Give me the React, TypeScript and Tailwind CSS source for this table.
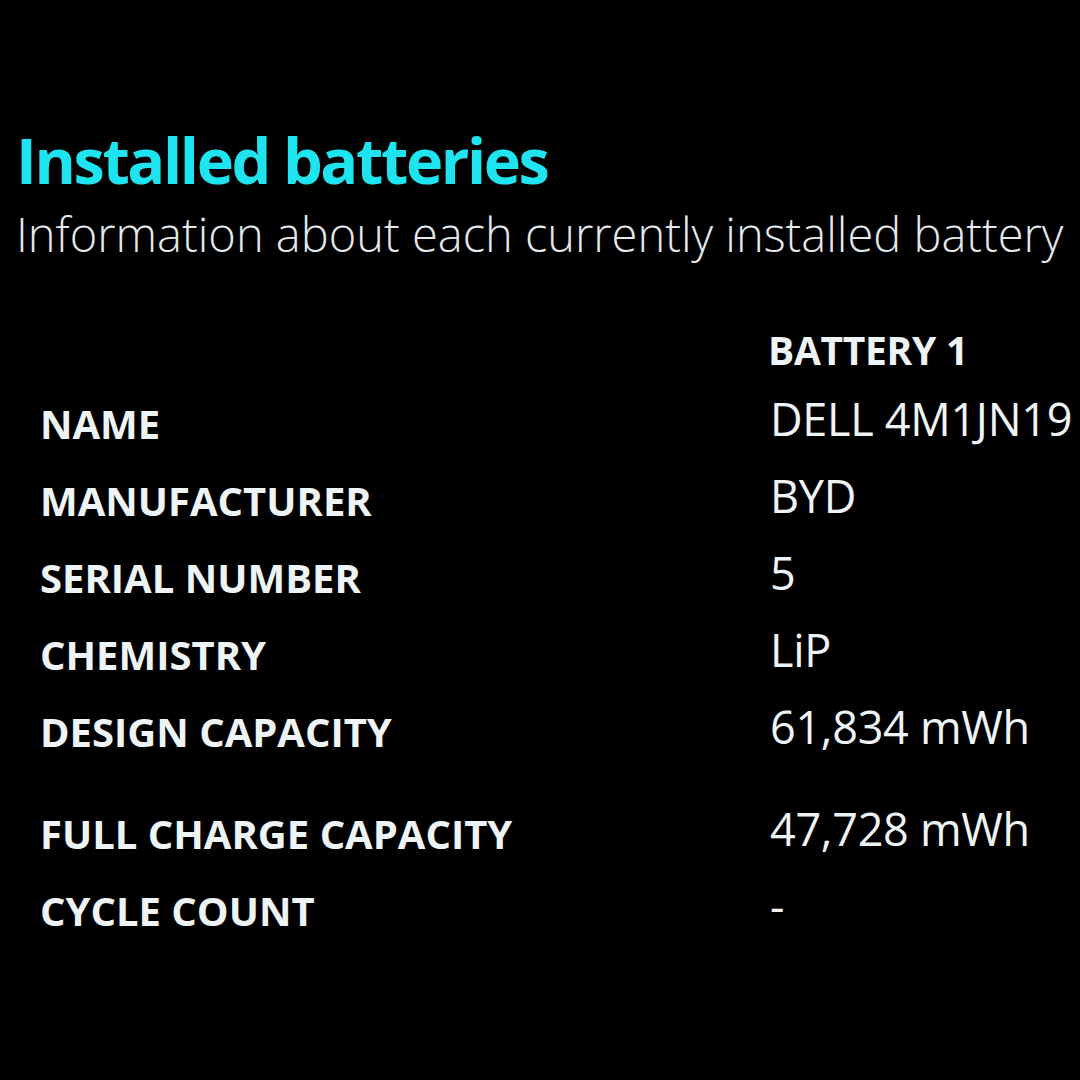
import React from "react";

const rows: { label: string; value: string; extra?: boolean }[] = [
  { label: "NAME", value: "DELL 4M1JN19" },
  { label: "MANUFACTURER", value: "BYD" },
  { label: "SERIAL NUMBER", value: "5" },
  { label: "CHEMISTRY", value: "LiP" },
  { label: "DESIGN CAPACITY", value: "61,834 mWh" },
  { label: "FULL CHARGE CAPACITY", value: "47,728 mWh", extra: true },
  { label: "CYCLE COUNT", value: "-" },
];

export default function App() {
  return (
    <div
      className="w-[1080px] h-[1080px] bg-black overflow-hidden text-[#eef4f6]"
      style={{ fontFamily: '"Open Sans", "Noto Sans", sans-serif' }}
    >
      <div className="pt-[120px] pl-[16px]">
        <h1 className="text-[63px] leading-[80px] font-bold tracking-[-2.4px] text-[#1ee4f0]">Installed batteries</h1>
        <p className="mt-[4px] text-[47px] leading-[60px] font-light tracking-[0px] text-[#e3e9ec] whitespace-nowrap">
          Information about each currently installed battery
        </p>
      </div>
      <div className="mt-[64px] grid grid-cols-[728px_1fr] pl-[40px]">
        <div />
        <div className="text-[39px] leading-[44px] font-bold tracking-[-0.3px]">BATTERY 1</div>
      </div>
      <div className="mt-[16px] flex flex-col pl-[40px]">
        {rows.map((r) => (
          <div
            key={r.label}
            className={`grid grid-cols-[730px_1fr] items-baseline h-[77px] ${r.extra ? "mt-[25px]" : ""}`}
          >
            <div className="text-[40px] font-bold whitespace-nowrap">{r.label}</div>
            <div className="text-[45px] tracking-[-0.3px] whitespace-nowrap relative top-[-3px]">{r.value}</div>
          </div>
        ))}
      </div>
    </div>
  );
}
